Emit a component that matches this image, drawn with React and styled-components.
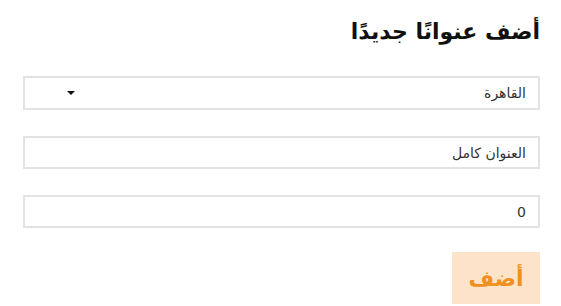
import React from "react";
import styled, { createGlobalStyle } from "styled-components";

const Global = createGlobalStyle`
  html, body { margin: 0; padding: 0; background: #fff; }
  body { font-family: "DejaVu Sans", "Noto Sans", sans-serif; }
`;

const Page = styled.div`
  direction: rtl;
  padding: 14px 21px 0 23px;
  display: flex;
  flex-direction: column;
`;

const Title = styled.h2`
  margin: 0;
  font-size: 22px;
  font-weight: bold;
  color: #111;
  line-height: 36px;
  height: 36px;
`;

const Form = styled.div`
  display: flex;
  flex-direction: column;
  margin-top: 26px;
  gap: 26px;
`;

const Field = styled.div`
  box-sizing: border-box;
  height: ${(p) => p.$h || 34}px;
  border: 2px solid #e3e3e3;
  display: flex;
  align-items: center;
  justify-content: space-between;
  padding: 0 12px 0 0;
  font-size: 14px;
  color: #333;
`;

const Caret = styled.span`
  width: 0;
  height: 0;
  border-left: 4px solid transparent;
  border-right: 4px solid transparent;
  border-top: 4px solid #111;
  margin-left: 42px;
`;

const Actions = styled.div`
  display: flex;
  margin-top: 24px;
`;

const Button = styled.button`
  direction: rtl;
  width: 88px;
  height: 52px;
  border: none;
  background: #fde3c9;
  color: #f0901f;
  font-family: "DejaVu Sans", sans-serif;
  font-size: 22px;
  font-weight: bold;
  padding: 0;
`;

export default function App() {
  return (
    <>
      <Global />
      <Page>
        <Title>أضف عنوانًا جديدًا</Title>
        <Form>
          <Field>
            <span>القاهرة</span>
            <Caret />
          </Field>
          <Field $h={33}>
            <span>العنوان كامل</span>
          </Field>
          <Field $h={33}>
            <span>0</span>
          </Field>
        </Form>
        <Actions>
          <Button>أضف</Button>
        </Actions>
      </Page>
    </>
  );
}
